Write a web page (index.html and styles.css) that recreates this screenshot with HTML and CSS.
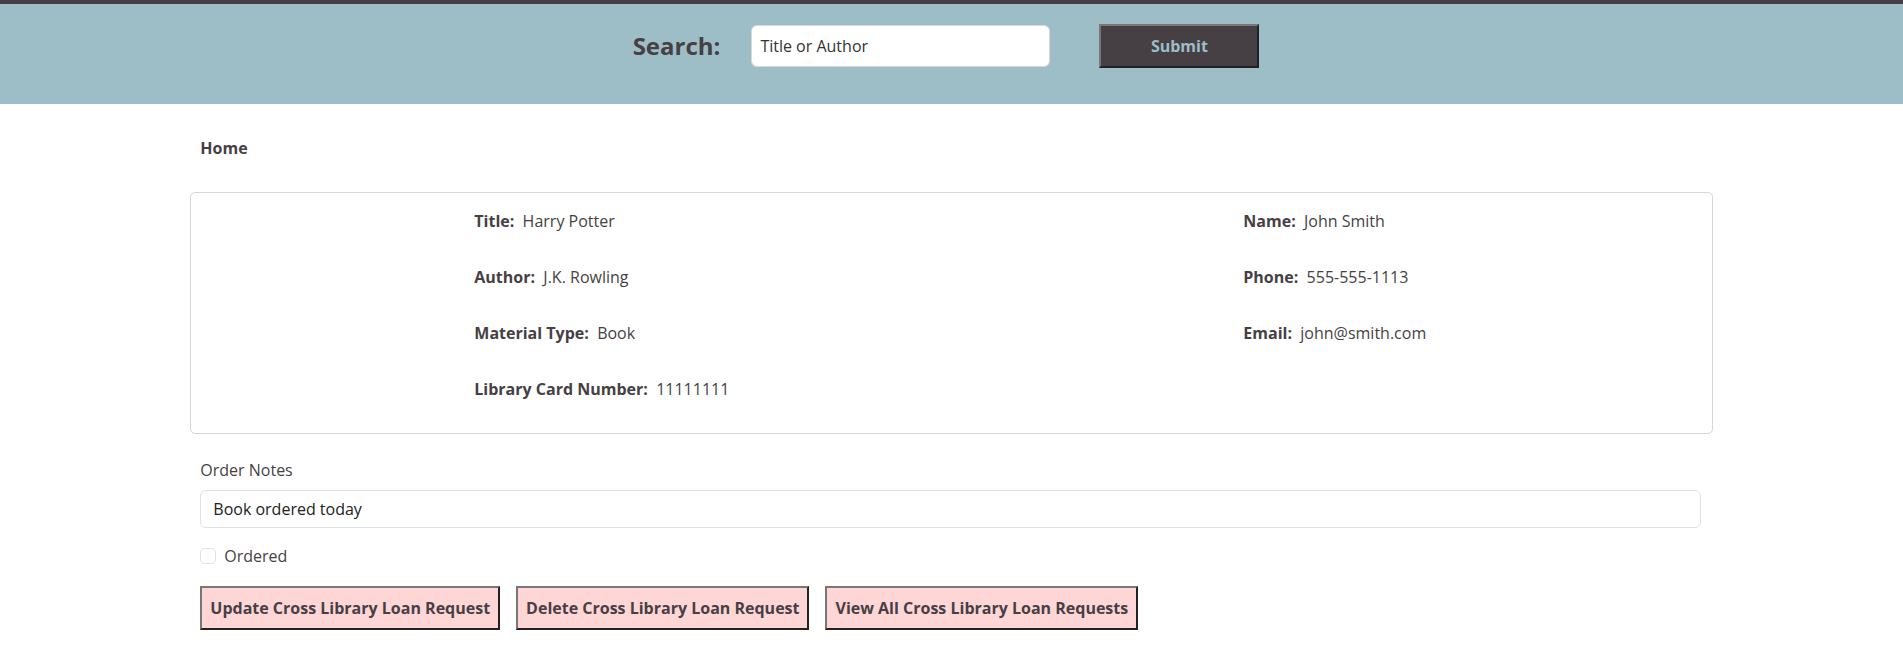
FILE: index.html
```html
<!DOCTYPE html>
<html lang="en">
<head>
<meta charset="utf-8">
<title>Cross Library Loan Request</title>
<link rel="stylesheet" href="styles.css">
</head>
<body>
<header class="topbar">
  <form class="search">
    <label class="search-label" for="q">Search:</label>
    <input class="search-input" id="q" type="text" value="Title or Author">
    <button class="search-btn" type="button">Submit</button>
  </form>
</header>
<main class="container">
  <nav class="crumbs"><a class="crumb" href="#">Home</a></nav>
  <section class="card">
    <div class="card-spacer"></div>
    <div class="col">
      <p class="field"><b>Title:</b>&nbsp; Harry Potter</p>
      <p class="field"><b>Author:</b>&nbsp; J.K. Rowling</p>
      <p class="field"><b>Material Type:</b>&nbsp; Book</p>
      <p class="field"><b>Library Card Number:</b>&nbsp; 11111111</p>
    </div>
    <div class="col">
      <p class="field"><b>Name:</b>&nbsp; John Smith</p>
      <p class="field"><b>Phone:</b>&nbsp; 555-555-1113</p>
      <p class="field"><b>Email:</b>&nbsp; john@smith.com</p>
    </div>
  </section>
  <form class="order-form">
    <label class="form-label" for="notes">Order Notes</label>
    <input class="form-input" id="notes" type="text" value="Book ordered today">
    <div class="check">
      <input class="check-input" id="ordered" type="checkbox">
      <label class="check-label" for="ordered">Ordered</label>
    </div>
    <div class="actions">
      <button class="action-btn" type="button">Update Cross Library Loan Request</button>
      <button class="action-btn" type="button">Delete Cross Library Loan Request</button>
      <button class="action-btn" type="button">View All Cross Library Loan Requests</button>
    </div>
  </form>
</main>
</body>
</html>
```
FILE: styles.css
```css
* { box-sizing: border-box; }

body {
  margin: 0;
  font-family: "Open Sans", "Noto Sans", sans-serif;
  font-size: 16px;
  line-height: 24px;
  color: #463f44;
  background: #fff;
}

.topbar {
  border-top: 4px solid #463f44;
  background: #9dbec6;
  height: 104px;
  padding-top: 20px;
}

.search {
  display: flex;
  align-items: center;
  justify-content: center;
  height: 44px;
  padding-right: 11px;
}

.search-label {
  font-size: 24px;
  font-weight: 700;
  color: #463f44;
  margin-right: 31px;
}

.search-input {
  width: 299px;
  height: 42px;
  border: 1px solid #d8d8d8;
  border-radius: 6px;
  padding: 0 8px;
  font-family: inherit;
  font-size: 16px;
  color: #333;
  background: #fff;
  margin-right: 49px;
}

.search-btn {
  width: 160px;
  height: 44px;
  background: #463f44;
  color: #9dbec6;
  font-family: inherit;
  font-size: 16px;
  font-weight: 700;
  border: 2px solid;
  border-color: #777 #222 #222 #777;
}

.container {
  width: 80%;
  margin: 0 auto;
}

.crumbs {
  padding: 32px 10px 0;
}

.crumb {
  font-size: 16px;
  font-weight: 700;
  color: #463f44;
  text-decoration: none;
}

.card {
  margin-top: 32px;
  border: 1px solid #d6d6d6;
  border-radius: 5px;
  display: grid;
  grid-template-columns: 283px 769px 1fr;
  padding: 16px 0 32px;
}

.col {
  display: flex;
  flex-direction: column;
  gap: 32px;
}

.field {
  margin: 0;
  font-size: 16px;
}

.field b { font-weight: 700; }

.order-form {
  padding: 24px 12px 0 10px;
}

.form-label {
  display: block;
  font-size: 16px;
  margin-bottom: 8px;
}

.form-input {
  display: block;
  width: 100%;
  height: 38px;
  border: 1px solid #dee2e6;
  border-radius: 6px;
  padding: 0 12px;
  font-family: inherit;
  font-size: 16px;
  color: #222;
}

.check {
  display: flex;
  align-items: center;
  margin-top: 16px;
  height: 24px;
}

.check-input {
  appearance: none;
  -webkit-appearance: none;
  width: 16px;
  height: 16px;
  margin: 0 8px 0 0;
  border: 1px solid #dee2e6;
  border-radius: 4px;
  background: #fff;
}

.check-label { font-size: 16px; }

.actions {
  display: flex;
  gap: 16px;
  margin-top: 18px;
}

.action-btn {
  height: 44px;
  padding: 0 8px;
  background: #ffd6d6;
  color: #463f44;
  font-family: inherit;
  font-size: 16px;
  font-weight: 700;
  border: 2px solid;
  border-color: #777 #222 #222 #777;
}
```
